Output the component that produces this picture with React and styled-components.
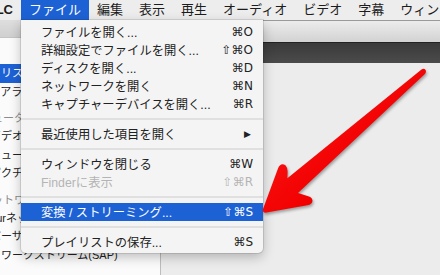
import React from 'react';
import styled, { createGlobalStyle } from 'styled-components';

// VLC "ファイル" menu opened over the playlist window

const menuBarItems = ['ファイル', '編集', '表示', '再生', 'オーディオ', 'ビデオ', '字幕', 'ウィンドウ'];

const fileMenu = [
  { label: 'ファイルを開く...', keys: '⌘O' },
  { label: '詳細設定でファイルを開く...', keys: '⇧⌘O' },
  { label: 'ディスクを開く...', keys: '⌘D' },
  { label: 'ネットワークを開く', keys: '⌘N' },
  { label: 'キャプチャーデバイスを開く...', keys: '⌘R' },
  { sep: true },
  { label: '最近使用した項目を開く', submenu: true },
  { sep: true },
  { label: 'ウィンドウを閉じる', keys: '⌘W' },
  { label: 'Finderに表示', keys: '⇧⌘R', disabled: true },
  { sep: true },
  { label: '変換 / ストリーミング...', keys: '⇧⌘S', active: true },
  { sep: true },
  { label: 'プレイリストの保存...', keys: '⌘S' },
];

const sidebar = [
  { header: 'ライブラリ' },
  { label: 'プレイリスト', active: true },
  { label: 'メディアライブラリ' },
  { header: 'マイコンピューター' },
  { label: 'マイビデオ' },
  { label: 'マイミュージック' },
  { label: 'マイピクチャ' },
  { header: 'ローカルネットワーク' },
  { label: 'Bonjourネットワーク' },
  { label: 'ユニバーサルプラグアンドプレイ' },
  { label: 'ネットワークストリーム(SAP)' },
];

const App = () => {
  return (
    <>
      <GlobalStyle />
      <Screen>
        <MenuBar>
          <AppName>VLC</AppName>
          {menuBarItems.map((name, i) => (
            <BarItem key={name} $open={i === 0}>{name}</BarItem>
          ))}
        </MenuBar>

        <Window>
          <Sidebar>
            <SidebarTop />
            <SidebarList>
              {sidebar.map((row, i) =>
                row.header ? (
                  <SidebarHeader key={i}>{row.header}</SidebarHeader>
                ) : (
                  <SidebarRow key={i} $active={row.active}>{row.label}</SidebarRow>
                )
              )}
            </SidebarList>
          </Sidebar>
          <Content>
            <Toolbar />
            <DarkBar />
            <Pane />
          </Content>
        </Window>

        <Dropdown>
          {fileMenu.map((item, i) =>
            item.sep ? (
              <Separator key={i} />
            ) : (
              <MenuRow key={i} $active={item.active} $disabled={item.disabled}>
                <span>{item.label}</span>
                {item.submenu ? <Submenu>▶</Submenu> : <Keys>{item.keys}</Keys>}
              </MenuRow>
            )
          )}
        </Dropdown>

        <Arrow viewBox="0 0 440 275" width="440" height="275">
          <defs>
            <linearGradient id="red" x1="0" y1="0" x2="1" y2="1">
              <stop offset="0" stopColor="#ff2020" />
              <stop offset="0.6" stopColor="#f20000" />
              <stop offset="1" stopColor="#d80000" />
            </linearGradient>
          </defs>
          <path
            d="M421.5 69.5 Q424 67.8 425.6 70 Q426.6 72.4 424.6 74.2
               L298 193 L309 196.5 Q314 198.8 311.8 203 Q310.2 205.2 306 205.6
               L266.5 212.6 Q262 213.2 263 209 L278.2 168
               Q280.8 162.4 285.4 165.2 Q287.6 167.4 287.6 171.5 L287.4 178.2 Z"
            fill="url(#red)"
          />
        </Arrow>
      </Screen>
    </>
  );
};

export default App;

// Styled components

const GlobalStyle = createGlobalStyle`
  html, body {
    margin: 0;
    padding: 0;
    overflow: hidden;
    background: #ececec;
  }
`;

const Screen = styled.div`
  position: relative;
  width: 440px;
  height: 275px;
  overflow: hidden;
  display: flex;
  flex-direction: column;
  font-family: "Liberation Sans", "Noto Sans CJK JP", sans-serif;
  color: #1c1c1c;
`;

const MenuBar = styled.div`
  display: flex;
  height: 20px;
  margin-left: -21px;
  background: #ededed;
  font-size: 13px;
  line-height: 20px;
  white-space: nowrap;
  flex-shrink: 0;
`;

const AppName = styled.div`
  padding: 0 8px;
  font-weight: bold;
`;

const BarItem = styled.div`
  padding: 0 8px;
  background: ${(p) => (p.$open ? '#1d62d5' : 'transparent')};
  color: ${(p) => (p.$open ? '#fff' : '#1c1c1c')};
`;

const Window = styled.div`
  flex: 1;
  display: flex;
  min-height: 0;
`;

const Sidebar = styled.div`
  width: 230px;
  margin-left: -70px;
  flex-shrink: 0;
  display: flex;
  flex-direction: column;
  background: #fbfbfb;
  border-right: 1px solid #bdbdbd;
`;

const SidebarTop = styled.div`
  height: 17px;
  background: linear-gradient(#dedede, #d0d0d0);
  border-bottom: 1px solid #c4c4c4;
`;

const SidebarList = styled.div`
  display: flex;
  flex-direction: column;
  font-size: 11px;
  white-space: nowrap;
`;

const SidebarHeader = styled.div`
  height: 26px;
  box-sizing: border-box;
  padding: 9px 0 0 7px;
  line-height: 16px;
  color: #8c8c8c;
`;

const SidebarRow = styled.div`
  height: 18.5px;
  line-height: 18.5px;
  padding-left: 38px;
  background: ${(p) => (p.$active ? '#1d62d5' : 'transparent')};
  color: ${(p) => (p.$active ? '#fff' : '#222')};
`;

const Content = styled.div`
  flex: 1;
  display: flex;
  flex-direction: column;
  border-top: 1px solid #9a9a9a;
`;

const Toolbar = styled.div`
  height: 21px;
  background: linear-gradient(#ececec, #d2d2d2);
`;

const DarkBar = styled.div`
  height: 20px;
  background: linear-gradient(#3a3a3a, #4b4b4b);
  border-top: 1px solid #222;
`;

const Pane = styled.div`
  flex: 1;
  background: #ececec;
`;

const Dropdown = styled.div`
  position: absolute;
  left: 21px;
  top: 20px;
  width: 242px;
  padding: 3px 0 2px;
  box-sizing: border-box;
  background: #f4f4f4;
  border-radius: 0 0 5px 5px;
  box-shadow: 0 0 0 1px rgba(0, 0, 0, 0.1), 0 4px 12px rgba(0, 0, 0, 0.25);
  font-size: 12.3px;
  white-space: nowrap;
`;

const MenuRow = styled.div`
  height: 18px;
  display: flex;
  align-items: center;
  justify-content: space-between;
  padding: 0 10px 0 20px;
  background: ${(p) => (p.$active ? '#1d62d5' : 'transparent')};
  color: ${(p) => (p.$active ? '#fff' : p.$disabled ? '#b4b4b4' : '#222')};
`;

const Keys = styled.span`
  font-family: "DejaVu Sans", sans-serif;
  font-size: 12px;
`;

const Submenu = styled.span`
  font-family: "DejaVu Sans", sans-serif;
  font-size: 9px;
  padding-right: 2px;
`;

const Separator = styled.div`
  height: 12px;
  display: flex;
  align-items: center;

  &::after {
    content: '';
    flex: 1;
    height: 2px;
    background: #e0e0e0;
  }
`;

const Arrow = styled.svg`
  position: absolute;
  left: 0;
  top: 0;
  pointer-events: none;
  filter: drop-shadow(1px 2px 1.5px rgba(0, 0, 0, 0.35));
`;
